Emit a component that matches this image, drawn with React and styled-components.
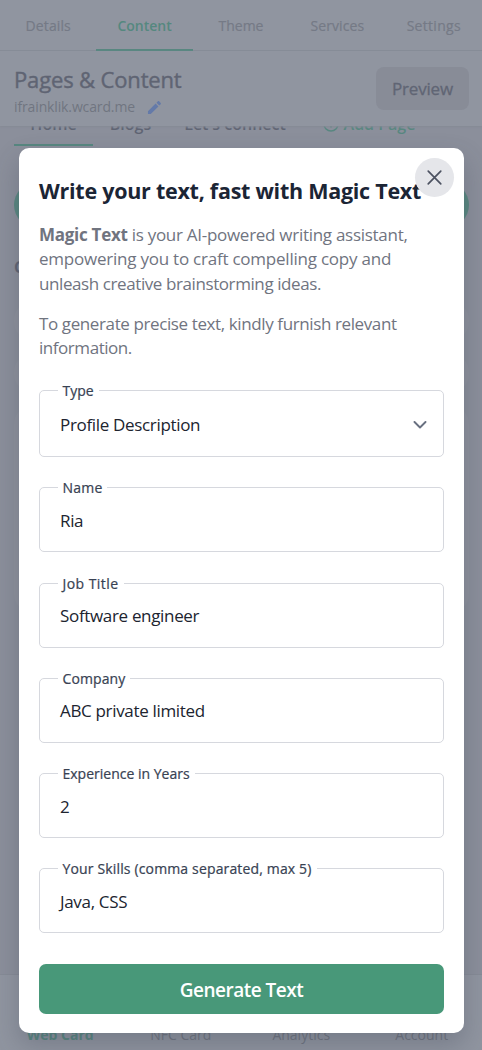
import React from "react";
import styled, { createGlobalStyle } from "styled-components";

const GlobalStyle = createGlobalStyle`
  *, *::before, *::after { box-sizing: border-box; }
  body { margin: 0; background: #8b8f9b; }
  h1, h2, p { margin: 0; }
  button, input { font-family: inherit; }
`;

const Screen = styled.div`
  position: relative;
  width: 482px;
  height: 1050px;
  overflow: hidden;
  display: flex;
  flex-direction: column;
  background: #8b8f9b;
  font-family: "Open Sans", "Noto Sans", sans-serif;
`;

const TopTabs = styled.nav`
  height: 51px;
  flex: none;
  display: grid;
  grid-template-columns: repeat(5, 1fr);
  background: #9095a0;
  border-bottom: 1px solid #878c97;
`;

const TopTab = styled.span`
  height: 51px;
  display: flex;
  align-items: center;
  justify-content: center;
  padding-top: 1px;
  border-bottom: 2px solid ${(p) => (p.$active ? "#588780" : "transparent")};
  color: ${(p) => (p.$active ? "#55887f" : "#757a86")};
  font-size: 14px;
  font-weight: ${(p) => (p.$active ? 600 : 400)};
  -webkit-text-stroke: ${(p) => (p.$active ? 0 : 0.2)}px;
  letter-spacing: ${(p) => p.$track || 0}px;
`;

const PageHeader = styled.header`
  position: relative;
  height: 75px;
  flex: none;
  display: flex;
  justify-content: space-between;
  padding: 16px 13px 0 14px;
  background: #9095a0;
  box-shadow: 0 1px 2px #858a95;
`;

const PageTitle = styled.h1`
  color: #5f6473;
  font-size: 22px;
  line-height: 24px;
  font-weight: 400;
  -webkit-text-stroke: 0.4px;
  letter-spacing: -0.15px;
`;

const Address = styled.div`
  display: flex;
  align-items: center;
  gap: 12px;
  margin-top: 6px;
  color: #707581;
  font-size: 14px;
  line-height: 20px;
  letter-spacing: -0.13px;
`;

const PreviewButton = styled.button`
  width: 93px;
  height: 43px;
  border: 0;
  padding: 0;
  border-radius: 8px;
  background: #888c97;
  color: #606574;
  font-size: 17px;
  font-weight: 400;
  -webkit-text-stroke: 0.3px;
  letter-spacing: -0.2px;
`;

const PageContent = styled.main`
  flex: 1;
  min-height: 0;
  overflow: hidden;
`;

const PageTabs = styled.div`
  display: flex;
  height: 20px;
  padding-left: 14px;
`;

const PageTab = styled.span`
  width: ${(p) => p.$width}px;
  height: 20px;
  display: flex;
  align-items: flex-end;
  justify-content: center;
  gap: 5px;
  border-bottom: ${(p) => (p.$active ? "2px solid #588780" : "0")};
  padding-bottom: ${(p) => (p.$active ? 12 : 14)}px;
  color: ${(p) => (p.$add ? "#588780" : "#5f6473")};
  font-size: 16px;
  line-height: 16px;
  font-weight: 600;
  white-space: nowrap;
`;

const AddBar = styled.div`
  height: 46px;
  margin: 36px 13px 0 14px;
  border-radius: 23px;
  background: #588780;
`;

const SectionTitle = styled.h2`
  margin: 29px 0 25px 14px;
  color: #5f6473;
  font-size: 16px;
  line-height: 20px;
  font-weight: 700;
`;

const ContentRow = styled.div`
  height: ${(p) => p.$height}px;
  margin: 0 13px 14px 14px;
  border-radius: 18px;
  background: #8e929d;
`;

const BottomNav = styled.nav`
  height: 76px;
  flex: none;
  display: grid;
  grid-template-columns: repeat(4, 1fr);
  align-items: end;
  padding-bottom: 5px;
  background: #9095a0;
  border-top: 1px solid #868b96;
`;

const NavLabel = styled.span`
  text-align: center;
  color: ${(p) => (p.$active ? "#588780" : "#707581")};
  font-size: 14px;
  line-height: 20px;
  font-weight: ${(p) => (p.$active ? 700 : 400)};
`;

const Modal = styled.section`
  position: absolute;
  left: 19px;
  top: 148px;
  width: 445px;
  height: 885px;
  display: flex;
  flex-direction: column;
  padding: 29px 20px 20px;
  border-radius: 10px;
  background: #fff;
  box-shadow: 0 12px 26px rgba(60, 66, 84, 0.3);
`;

const ModalTitle = styled.h2`
  color: #1b2535;
  font-size: 21.5px;
  line-height: 28px;
  font-weight: 700;
  letter-spacing: ${(p) => p.$track}px;
  white-space: nowrap;
`;

const CloseButton = styled.button`
  position: absolute;
  right: 10px;
  top: 10px;
  width: 39px;
  height: 39px;
  padding: 0;
  display: grid;
  place-items: center;
  border: 0;
  border-radius: 50%;
  background: #e5e6ea;
`;

const Copy = styled.p`
  margin-top: ${(p) => p.$gap}px;
  color: #70747f;
  font-size: 17px;
  line-height: 24.7px;
`;

const Line = styled.span`
  display: block;
  white-space: nowrap;
  letter-spacing: ${(p) => p.$track}px;
`;

const Form = styled.form`
  display: flex;
  flex-direction: column;
  gap: 30.3px;
  margin-top: 29.3px;
`;

const Field = styled.div`
  position: relative;
  height: ${(p) => p.$height || 65}px;
  display: flex;
  align-items: center;
  justify-content: space-between;
  padding: 2px 16px 0 20px;
  border: 1px solid #d6d8de;
  border-radius: 5px;
  color: #20242f;
`;

const FieldLabel = styled.label`
  position: absolute;
  left: 17.5px;
  top: -11px;
  padding: 0 5px;
  background: #fff;
  color: #384253;
  font-size: 14px;
  line-height: 22px;
  font-weight: 400;
  -webkit-text-stroke: 0.22px;
  letter-spacing: ${(p) => p.$track}px;
  white-space: nowrap;
`;

const FieldValue = styled.span`
  font-size: 17px;
  line-height: 24px;
  letter-spacing: ${(p) => p.$track}px;
`;

const GenerateButton = styled.button`
  height: 50px;
  border: 0;
  padding: 2px 0 0;
  border-radius: 7px;
  background: #489879;
  color: #fff;
  font-size: 19px;
  font-weight: 600;
  letter-spacing: -0.5px;
`;

const fields = [
  { label: "Type", value: "Profile Description", height: 66.5, select: true },
  { label: "Name", value: "Ria", track: 0.2 },
  { label: "Job Title", value: "Software engineer", track: 0.45 },
  { label: "Company", value: "ABC private limited", track: 0.1 },
  { label: "Experience in Years", value: "2" },
  { label: "Your Skills (comma separated, max 5)", value: "Java, CSS", track: 0.15 },
];

function PencilIcon() {
  return (
    <svg width="15" height="15" viewBox="0 0 16 16" fill="#647aa9">
      <path d="M1 12v3h3l8.2-8.2-3-3zM14.6 4.4c.4-.4.4-.9 0-1.3l-1.7-1.7c-.4-.4-.9-.4-1.3 0L10.1 2.9l3 3z" />
    </svg>
  );
}

export default function App() {
  return (
    <>
      <GlobalStyle />
      <Screen>
        <TopTabs>
          <TopTab $track={0.1}>Details</TopTab>
          <TopTab $active>Content</TopTab>
          <TopTab>Theme</TopTab>
          <TopTab $track={0.1}>Services</TopTab>
          <TopTab $track={0.3}>Settings</TopTab>
        </TopTabs>
        <PageHeader>
          <div>
            <PageTitle>Pages &amp; Content</PageTitle>
            <Address>
              ifrainklik.wcard.me
              <PencilIcon />
            </Address>
          </div>
          <PreviewButton>Preview</PreviewButton>
        </PageHeader>
        <PageContent>
          <PageTabs>
            <PageTab $width={79} $active>Home</PageTab>
            <PageTab $width={75}>Blogs</PageTab>
            <PageTab $width={134}>Let's connect</PageTab>
            <PageTab $width={134} $add>
              <svg width="16" height="16" viewBox="0 0 16 16" fill="none" stroke="#588780" strokeWidth="1.5">
                <circle cx="8" cy="8" r="7" />
                <path d="M8 4.5v7M4.5 8h7" />
              </svg>
              Add Page
            </PageTab>
          </PageTabs>
          <AddBar />
          <SectionTitle>Content</SectionTitle>
          <ContentRow $height={38} />
          <ContentRow $height={38} />
          <ContentRow $height={206} />
        </PageContent>
        <BottomNav>
          <NavLabel $active>Web Card</NavLabel>
          <NavLabel>NFC Card</NavLabel>
          <NavLabel>Analytics</NavLabel>
          <NavLabel>Account</NavLabel>
        </BottomNav>
        <Modal>
          <ModalTitle $track={-0.26}>Write your text, fast with Magic Text</ModalTitle>
          <CloseButton aria-label="Close">
            <svg width="15" height="15" viewBox="0 0 16 16" fill="none" stroke="#4c5261" strokeWidth="1.8" strokeLinecap="round">
              <path d="M1.3 1.3l13.4 13.4M14.7 1.3L1.3 14.7" />
            </svg>
          </CloseButton>
          <Copy $gap={17.6}>
            <Line $track={-0.28}><b>Magic Text</b> is your AI-powered writing assistant,</Line>
            <Line $track={-0.23}>empowering you to craft compelling copy and</Line>
            <Line $track={-0.41}>unleash creative brainstorming ideas.</Line>
          </Copy>
          <Copy $gap={15}>
            <Line $track={-0.39}>To generate precise text, kindly furnish relevant</Line>
            <Line $track={-0.45}>information.</Line>
          </Copy>
          <Form>
            {fields.map((f) => (
              <Field key={f.label} $height={f.height}>
                <FieldLabel $track={f.track || 0}>{f.label}</FieldLabel>
                <FieldValue $track={-0.33}>{f.value}</FieldValue>
                {f.select && (
                  <svg width="14" height="8" viewBox="0 0 14 8" fill="none" stroke="#687080" strokeWidth="1.9" strokeLinecap="round" strokeLinejoin="round">
                    <path d="M1.5 1L7 6.5 12.5 1" />
                  </svg>
                )}
              </Field>
            ))}
            <GenerateButton type="button">Generate Text</GenerateButton>
          </Form>
        </Modal>
      </Screen>
    </>
  );
}
